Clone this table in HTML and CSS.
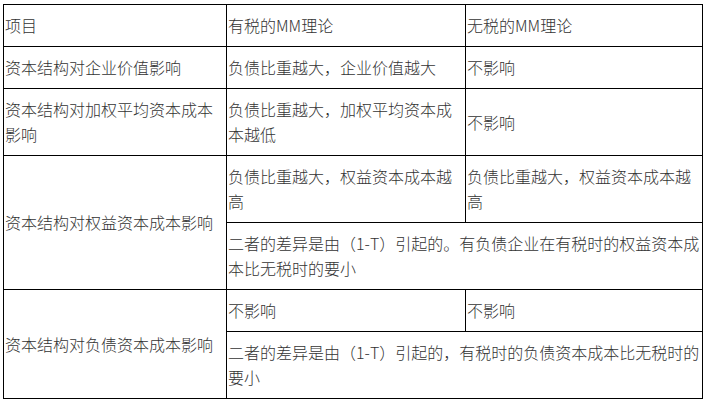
FILE: index.html
```html
<!DOCTYPE html>
<html lang="zh-CN">
<head>
<meta charset="utf-8">
<link rel="stylesheet" href="styles.css">
</head>
<body>
<div class="wrap">
<table class="mm">
<colgroup>
<col class="c1"><col class="c2"><col class="c3">
</colgroup>
<tbody>
<tr><td>项目</td><td>有税的MM理论</td><td>无税的MM理论</td></tr>
<tr><td>资本结构对企业价值影响</td><td>负债比重越大，企业价值越大</td><td>不影响</td></tr>
<tr><td>资本结构对加权平均资本成本影响</td><td>负债比重越大，加权平均资本成本越低</td><td>不影响</td></tr>
<tr><td rowspan="2">资本结构对权益资本成本影响</td><td>负债比重越大，权益资本成本越高</td><td>负债比重越大，权益资本成本越高</td></tr>
<tr><td colspan="2">二者的差异是由（1-T）引起的。有负债企业在有税时的权益资本成本比无税时的要小</td></tr>
<tr><td rowspan="2">资本结构对负债资本成本影响</td><td>不影响</td><td>不影响</td></tr>
<tr><td colspan="2">二者的差异是由（1-T）引起的，有税时的负债资本成本比无税时的要小</td></tr>
</tbody>
</table>
</div>
</body>
</html>
```
FILE: styles.css
```css
html, body {
  margin: 0;
  padding: 0;
  background: #fff;
}
.wrap {
  padding: 4px 0 0 3px;
}
.mm {
  border-collapse: collapse;
  table-layout: fixed;
  width: 699px;
  font-family: "Noto Sans CJK SC", "Microsoft YaHei", sans-serif;
  font-size: 16px;
  font-weight: 300;
  line-height: 25px;
  color: #333;
}
.c1 { width: 223px; }
.c2 { width: 239px; }
.c3 { width: 237px; }
.mm td {
  border: 1px solid #000;
  padding: 8px 0 8px 1px;
  vertical-align: middle;
  text-align: left;
  word-break: break-all;
}
```
